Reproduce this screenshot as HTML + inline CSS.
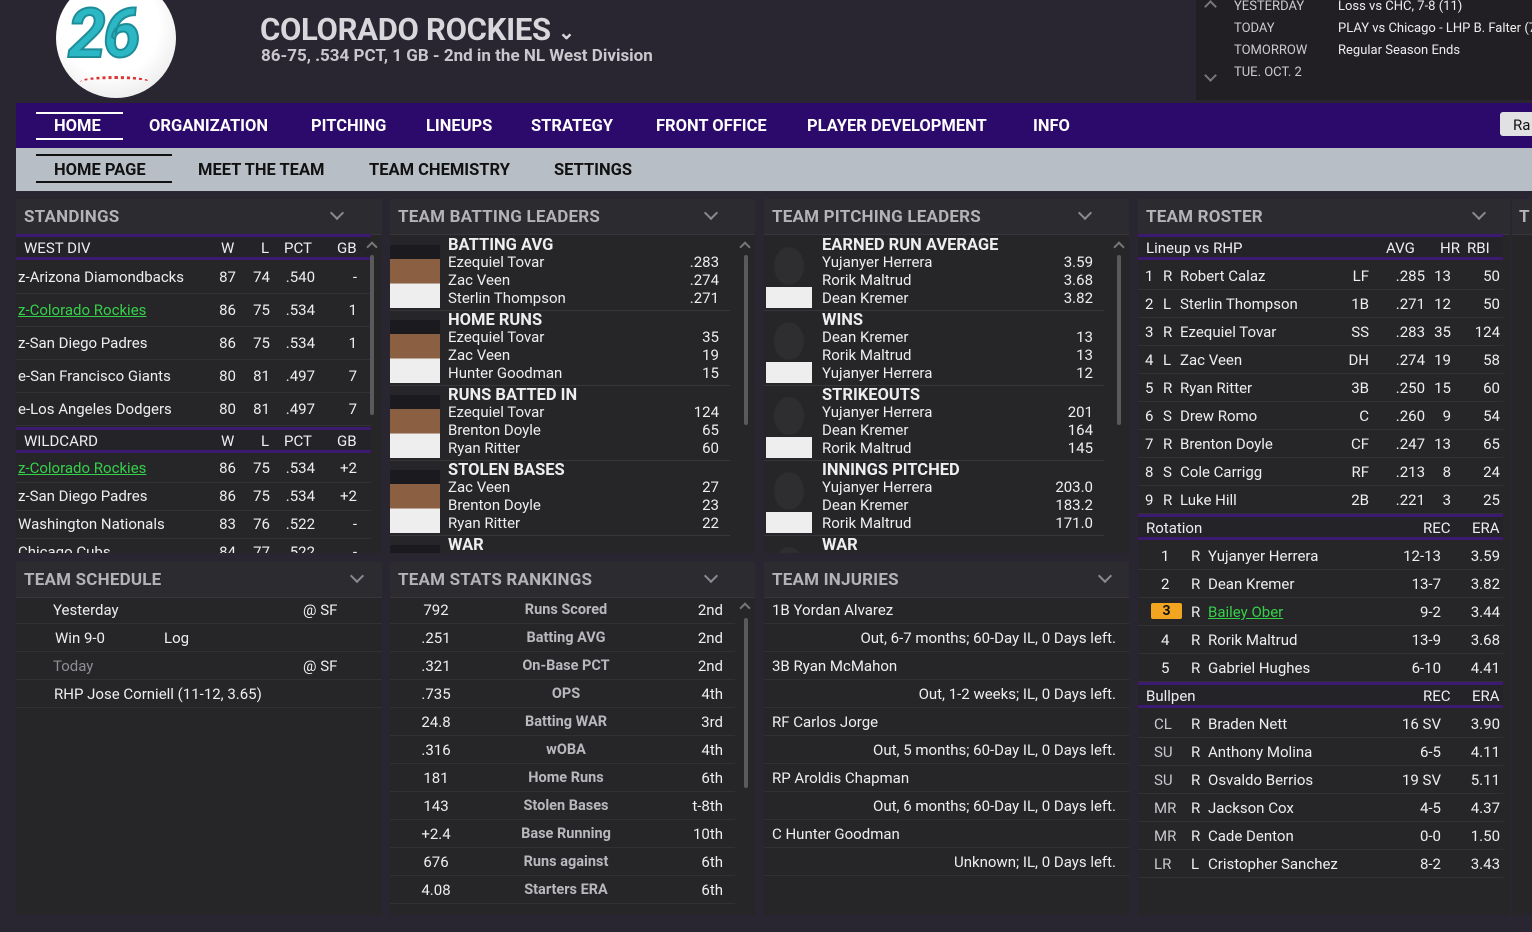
<!DOCTYPE html>
<html><head><meta charset="utf-8"><style>
*{margin:0;padding:0;box-sizing:border-box}
body{width:1532px;height:932px;overflow:hidden;background:#2a2631;font-family:"Roboto","Liberation Sans",sans-serif;color:#eeeef0;position:relative;font-size:15px}
.a{position:absolute;white-space:nowrap}
.p{position:absolute;background:#262528}
.ph{position:absolute;left:0;right:0;top:0;height:36px;background:#2c2b2f;border-bottom:1px solid #38363c}
.ph b{position:absolute;left:8px;top:8px;font-size:17px;color:#b4b3b8;letter-spacing:.2px}
.chev{position:absolute;top:9px;width:10px;height:10px;border-right:2px solid #8b8a90;border-bottom:2px solid #8b8a90;transform:rotate(45deg)}
.row{position:absolute;height:28px;border-bottom:1px solid #313034}
.row span{position:absolute;top:5px;white-space:nowrap}
.r{text-align:right}
.hd{position:absolute;height:26px;border-top:3px solid #3b1a72;border-bottom:3px solid #3b1a72;background:#242327}
.hd span{position:absolute;top:2px}
.g{color:#35d04a;text-decoration:underline}
.nav span{position:absolute;top:14px;font-weight:bold;font-size:16.5px;color:#fff}
.sub span{position:absolute;top:13px;font-weight:bold;font-size:16.5px;color:#111}
.ph2{position:absolute;width:50px;height:70px;background:linear-gradient(#26252a 0,#26252a 10%,#1b1a1e 10%,#1b1a1e 30%,#8a5f42 30%,#8a5f42 65%,#eee 65%)}
.ph3{position:absolute;width:46px;height:70px;background:radial-gradient(ellipse 15px 19px at 23px 28px,#2e2e30 98%,transparent 100%),linear-gradient(transparent 70%,#eee 70%)}
.lt{font-weight:bold;font-size:16.5px}
.sb{position:absolute;width:4px;background:#5a595e;border-radius:2px}
.up{position:absolute;width:8px;height:8px;border-left:2px solid #777;border-top:2px solid #777;transform:rotate(45deg)}
</style></head><body>
<!-- header -->
<div class="a" style="left:56px;top:-22px;width:120px;height:120px;border-radius:50%;background:radial-gradient(circle at 45% 40%,#fff 50%,#ddd 100%)"></div>
<div class="a" style="left:68px;top:-6px;font-size:68px;font-weight:bold;color:#2bb8c4;letter-spacing:-3px;font-style:italic;-webkit-text-stroke:2px #1e8d9a">26</div>
<div class="a" style="left:80px;top:76px;width:70px;height:12px;border-top:3px dotted #d33;border-radius:50%"></div>
<div class="a" style="left:260px;top:11px;font-size:31px;font-weight:bold;color:#d8d7dc;letter-spacing:-.3px">COLORADO ROCKIES <span style="font-size:20px;vertical-align:middle">&#8964;</span></div>
<div class="a" style="left:261px;top:46px;font-size:17px;font-weight:bold;color:#c9c8ce">86-75, .534 PCT, 1 GB - 2nd in the NL West Division</div>
<div class="a" style="left:1196px;top:0;width:336px;height:100px;background:#211f24"></div>
<div class="a" style="left:1206px;top:2px;width:9px;height:9px;border-left:2px solid #777;border-top:2px solid #777;transform:rotate(45deg)"></div>
<div class="a" style="left:1206px;top:71px;width:9px;height:9px;border-right:2px solid #777;border-bottom:2px solid #777;transform:rotate(45deg)"></div>
<div class="a" style="left:1234px;top:-4px;font-size:13px;color:#ccc;line-height:22px">YESTERDAY<br>TODAY<br>TOMORROW<br>TUE. OCT. 2</div>
<div class="a" style="left:1338px;top:-4px;font-size:13px;color:#eee;line-height:22px">Loss vs CHC, 7-8 (11)<br>PLAY vs Chicago - LHP B. Falter (7<br>Regular Season Ends</div>
<!-- nav -->
<div class="a nav" style="left:16px;top:103px;width:1516px;height:45px;background:#2c0a6b">
<div class="a" style="left:20px;top:9px;width:87px;height:2px;background:#fff"></div>
<div class="a" style="left:20px;top:35px;width:87px;height:2px;background:#fff"></div>
<span style="left:38px">HOME</span><span style="left:133px">ORGANIZATION</span><span style="left:295px">PITCHING</span><span style="left:410px">LINEUPS</span><span style="left:515px">STRATEGY</span><span style="left:640px">FRONT OFFICE</span><span style="left:791px">PLAYER DEVELOPMENT</span><span style="left:1017px">INFO</span>
<div class="a" style="left:1484px;top:9px;width:40px;height:24px;background:#e1e1e3;border-radius:3px;color:#111;font-size:15px;padding:4px 0 0 13px">Ra</div>
</div>
<div class="a sub" style="left:16px;top:148px;width:1516px;height:43px;background:#b8bec5">
<div class="a" style="left:20px;top:6px;width:136px;height:2px;background:#111"></div>
<div class="a" style="left:20px;top:33px;width:136px;height:2px;background:#111"></div>
<span style="left:38px">HOME PAGE</span><span style="left:182px">MEET THE TEAM</span><span style="left:353px">TEAM CHEMISTRY</span><span style="left:538px">SETTINGS</span>
</div>

<!-- standings -->
<div class="p" style="left:16px;top:199px;width:366px;height:354px;overflow:hidden">
<div class="ph"><b>STANDINGS</b><div class="chev" style="left:316px"></div></div>
<div class="hd" style="left:0;top:35px;width:355px"><span style="left:8px">WEST DIV</span><span style="left:205px">W</span><span style="left:245px">L</span><span style="left:268px">PCT</span><span style="left:321px">GB</span></div>
<div id="st"></div>
<div class="up" style="left:352px;top:44px"></div>
<div class="sb" style="left:354px;top:56px;height:160px"></div>
</div>
<!-- batting -->
<div class="p" style="left:390px;top:199px;width:365px;height:354px;overflow:hidden">
<div class="ph"><b>TEAM BATTING LEADERS</b><div class="chev" style="left:316px"></div></div>
<div id="bl"></div>
<div class="up" style="left:351px;top:44px"></div>
<div class="sb" style="left:354px;top:56px;height:170px"></div>
</div>
<!-- pitching -->
<div class="p" style="left:764px;top:199px;width:365px;height:354px;overflow:hidden">
<div class="ph"><b>TEAM PITCHING LEADERS</b><div class="chev" style="left:316px"></div></div>
<div id="pl"></div>
<div class="up" style="left:351px;top:44px"></div>
<div class="sb" style="left:353px;top:56px;height:170px"></div>
</div>
<!-- roster -->
<div class="p" style="left:1138px;top:199px;width:372px;height:716px;overflow:hidden">
<div class="ph"><b>TEAM ROSTER</b><div class="chev" style="left:336px"></div></div>
<div id="ro"></div>
</div>
<div class="p" style="left:1512px;top:199px;width:20px;height:716px"><div class="ph"><b style="left:7px">T</b></div></div>
<!-- schedule -->
<div class="p" style="left:16px;top:562px;width:366px;height:353px">
<div class="ph"><b>TEAM SCHEDULE</b><div class="chev" style="left:336px"></div></div>
<div class="row" style="left:0;top:34px;width:366px"><span style="left:37px">Yesterday</span><span style="left:287px">@ SF</span></div>
<div class="row" style="left:0;top:62px;width:366px"><span style="left:39px">Win 9-0</span><span style="left:148px">Log</span></div>
<div class="row" style="left:0;top:90px;width:366px"><span style="left:37px;color:#8f8e94">Today</span><span style="left:287px">@ SF</span></div>
<div class="row" style="left:0;top:118px;width:366px"><span style="left:38px">RHP Jose Corniell (11-12, 3.65)</span></div>
</div>
<!-- stats -->
<div class="p" style="left:390px;top:562px;width:365px;height:353px;overflow:hidden">
<div class="ph"><b>TEAM STATS RANKINGS</b><div class="chev" style="left:316px"></div></div>
<div id="sr"></div>
</div>
<!-- injuries -->
<div class="p" style="left:764px;top:562px;width:365px;height:353px">
<div class="ph"><b>TEAM INJURIES</b><div class="chev" style="left:336px"></div></div>
<div id="in"></div>
</div>
<script>
function h(id,s){document.getElementById(id).innerHTML=s}
var s='';
function srow(t,y,a,g){var q=(y/2-10);return '<div class="row" style="left:0;top:'+t+'px;width:355px;height:'+(y)+'px"><span style="left:2px;top:'+q+'px"'+(g?' class="g"':'')+'>'+a[0]+'</span><span class="r" style="right:135px;top:'+q+'px">'+a[1]+'</span><span class="r" style="right:101px;top:'+q+'px">'+a[2]+'</span><span class="r" style="right:56px;top:'+q+'px">'+a[3]+'</span><span class="r" style="right:14px;top:'+q+'px">'+a[4]+'</span></div>'}
var W=[["z-Arizona Diamondbacks",87,74,".540","-"],["z-Colorado Rockies",86,75,".534",1],["z-San Diego Padres",86,75,".534",1],["e-San Francisco Giants",80,81,".497",7],["e-Los Angeles Dodgers",80,81,".497",7]];
W.forEach(function(r,i){s+=srow(62+i*33,33,r,i==1)});
s+='<div class="hd" style="left:0;top:228px;width:355px"><span style="left:8px">WILDCARD</span><span style="left:205px">W</span><span style="left:245px">L</span><span style="left:268px">PCT</span><span style="left:321px">GB</span></div>';
var C=[["z-Colorado Rockies",86,75,".534","+2"],["z-San Diego Padres",86,75,".534","+2"],["Washington Nationals",83,76,".522","-"],["Chicago Cubs",84,77,".522","-"]];
C.forEach(function(r,i){s+=srow(256+i*28,28,r,i==0)});
h('st',s);
function leaders(id,data,pic){var o='';data.forEach(function(d,i){var t=37+i*75;o+='<div class="'+pic+'" style="left:'+(pic=='ph2'?0:2)+'px;top:'+(t+2)+'px"></div><div class="a lt" style="left:58px;top:'+(t)+'px">'+d[0]+'</div>';for(var k=0;k<3;k++){o+='<div class="a" style="left:58px;top:'+(t+17+k*18)+'px">'+d[1][k]+'</div><div class="a r" style="right:36px;top:'+(t+17+k*18)+'px">'+d[2][k]+'</div>'}o+='<div class="a" style="left:0;width:340px;top:'+(t+74)+'px;height:1px;background:#38363b"></div>'});h(id,o)}
leaders('bl',[["BATTING AVG",["Ezequiel Tovar","Zac Veen","Sterlin Thompson"],[".283",".274",".271"]],["HOME RUNS",["Ezequiel Tovar","Zac Veen","Hunter Goodman"],[35,19,15]],["RUNS BATTED IN",["Ezequiel Tovar","Brenton Doyle","Ryan Ritter"],[124,65,60]],["STOLEN BASES",["Zac Veen","Brenton Doyle","Ryan Ritter"],[27,23,22]],["WAR",["","",""],["","",""]]],'ph2');
leaders('pl',[["EARNED RUN AVERAGE",["Yujanyer Herrera","Rorik Maltrud","Dean Kremer"],["3.59","3.68","3.82"]],["WINS",["Dean Kremer","Rorik Maltrud","Yujanyer Herrera"],[13,13,12]],["STRIKEOUTS",["Yujanyer Herrera","Dean Kremer","Rorik Maltrud"],[201,164,145]],["INNINGS PITCHED",["Yujanyer Herrera","Dean Kremer","Rorik Maltrud"],["203.0","183.2","171.0"]],["WAR",["","",""],["","",""]]],'ph3');
var R=[["792","Runs Scored","2nd"],[".251","Batting AVG","2nd"],[".321","On-Base PCT","2nd"],[".735","OPS","4th"],["24.8","Batting WAR","3rd"],[".316","wOBA","4th"],["181","Home Runs","6th"],["143","Stolen Bases","t-8th"],["+2.4","Base Running","10th"],["676","Runs against","6th"],["4.08","Starters ERA","6th"]];
s='';R.forEach(function(r,i){s+='<div class="row" style="left:0;top:'+(34+i*28)+'px;width:345px"><span style="left:0;width:92px;text-align:center">'+r[0]+'</span><span style="left:100px;width:152px;text-align:center;color:#b9b8bd;font-weight:bold;font-size:14.5px">'+r[1]+'</span><span class="r" style="right:12px">'+r[2]+'</span></div>'});
s+='<div class="up" style="left:351px;top:42px"></div><div class="sb" style="left:354px;top:56px;height:170px"></div>';h('sr',s);
var I=[["1B Yordan Alvarez","Out, 6-7 months; 60-Day IL, 0 Days left."],["3B Ryan McMahon","Out, 1-2 weeks; IL, 0 Days left."],["RF Carlos Jorge","Out, 5 months; 60-Day IL, 0 Days left."],["RP Aroldis Chapman","Out, 6 months; 60-Day IL, 0 Days left."],["C Hunter Goodman","Unknown; IL, 0 Days left."]];
s='';I.forEach(function(r,i){s+='<div class="row" style="left:0;top:'+(34+i*56)+'px;width:365px"><span style="left:8px">'+r[0]+'</span></div><div class="row" style="left:0;top:'+(62+i*56)+'px;width:365px"><span class="r" style="right:13px">'+r[1]+'</span></div>'});h('in',s);
s='<div class="hd" style="left:0;top:35px;width:365px"><span style="left:8px">Lineup vs RHP</span><span style="left:248px">AVG</span><span style="left:302px">HR</span><span style="left:329px">RBI</span></div>';
var L=[[1,"R","Robert Calaz","LF",".285",13,50],[2,"L","Sterlin Thompson","1B",".271",12,50],[3,"R","Ezequiel Tovar","SS",".283",35,124],[4,"L","Zac Veen","DH",".274",19,58],[5,"R","Ryan Ritter","3B",".250",15,60],[6,"S","Drew Romo","C",".260",9,54],[7,"R","Brenton Doyle","CF",".247",13,65],[8,"S","Cole Carrigg","RF",".213",8,24],[9,"R","Luke Hill","2B",".221",3,25]];
L.forEach(function(r,i){s+='<div class="row" style="left:0;top:'+(63+i*28)+'px;width:365px"><span style="left:7px">'+r[0]+'</span><span style="left:25px">'+r[1]+'</span><span style="left:42px">'+r[2]+'</span><span class="r" style="right:134px">'+r[3]+'</span><span class="r" style="right:78px">'+r[4]+'</span><span class="r" style="right:52px">'+r[5]+'</span><span class="r" style="right:3px">'+r[6]+'</span></div>'});
s+='<div class="hd" style="left:0;top:315px;width:365px"><span style="left:8px">Rotation</span><span style="left:285px">REC</span><span style="left:334px">ERA</span></div>';
var P=[[1,"Yujanyer Herrera","12-13","3.59"],[2,"Dean Kremer","13-7","3.82"],[3,"Bailey Ober","9-2","3.44"],[4,"Rorik Maltrud","13-9","3.68"],[5,"Gabriel Hughes","6-10","4.41"]];
P.forEach(function(r,i){var n=i==2?'<span style="left:13px;top:5px;width:31px;height:16px;background:#f2a521;border-radius:2px;color:#111;text-align:center;font-size:14px;line-height:16px;font-weight:bold">3</span>':'<span style="left:23px">'+r[0]+'</span>';s+='<div class="row" style="left:0;top:'+(343+i*28)+'px;width:365px">'+n+'<span style="left:53px">R</span><span style="left:70px"'+(i==2?' class="g"':'')+'>'+r[1]+'</span><span class="r" style="right:62px">'+r[2]+'</span><span class="r" style="right:3px">'+r[3]+'</span></div>'});
s+='<div class="hd" style="left:0;top:483px;width:365px"><span style="left:8px">Bullpen</span><span style="left:285px">REC</span><span style="left:334px">ERA</span></div>';
var B=[["CL","R","Braden Nett","16 SV","3.90"],["SU","R","Anthony Molina","6-5","4.11"],["SU","R","Osvaldo Berrios","19 SV","5.11"],["MR","R","Jackson Cox","4-5","4.37"],["MR","R","Cade Denton","0-0","1.50"],["LR","L","Cristopher Sanchez","8-2","3.43"]];
B.forEach(function(r,i){s+='<div class="row" style="left:0;top:'+(511+i*28)+'px;width:365px"><span style="left:16px;color:#c9c8cd">'+r[0]+'</span><span style="left:53px">'+r[1]+'</span><span style="left:70px">'+r[2]+'</span><span class="r" style="right:62px">'+r[3]+'</span><span class="r" style="right:3px">'+r[4]+'</span></div>'});
h('ro',s);
</script>
</body></html>
